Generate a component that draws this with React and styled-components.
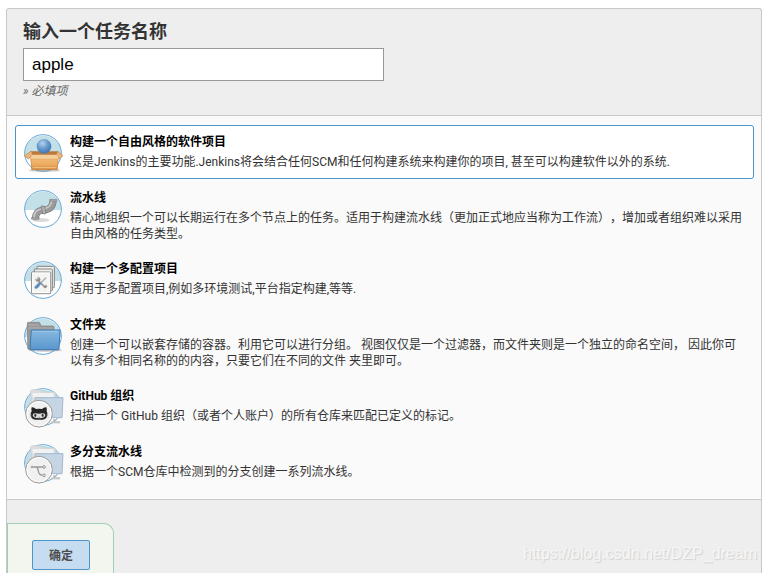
import React, { useState } from 'react'
import styled, { createGlobalStyle } from 'styled-components'

const GlobalStyle = createGlobalStyle`
    * {
        box-sizing: border-box;
    }
    body {
        margin: 0;
        background: #fff;
        color: #333;
        font-family: Roboto, 'Noto Sans CJK SC', sans-serif;
        font-size: 12px;
        line-height: 16px;
        text-spacing-trim: space-all;
    }
`

const PageStyled = styled.main`
    display: flex;
    min-height: 100vh;
    padding: 8px 5px 0 6px;
`

const PanelStyled = styled.form`
    position: relative;
    display: flex;
    flex: 1;
    flex-direction: column;
    border: 1px solid #c8c8c8;
    border-bottom: 0;
    border-radius: 3px 3px 0 0;
    background: #eee;
`

const HeaderStyled = styled.header`
    display: flex;
    flex-direction: column;
    align-items: flex-start;
    padding: 10px 16px 16px;
`

const NameLabel = styled.label`
    font-size: 18px;
    font-weight: bold;
    line-height: 26px;
`

const NameInput = styled.input`
    width: 361px;
    max-width: 100%;
    height: 33px;
    margin-top: 3px;
    padding: 0 8px;
    border: 1px solid #999;
    outline: 0;
    background: #fff;
    color: #000;
    font-family: 'Liberation Sans', Arial, sans-serif;
    font-size: 17px;
`

const Hint = styled.p`
    margin: 2px 0 0;
    color: #666;
    font-style: italic;
`

const JobList = styled.ul`
    display: flex;
    flex-direction: column;
    gap: 2px;
    margin: 0;
    padding: 9px 7px 10px 8px;
    border: solid #c8c8c8;
    border-width: 1px 0;
    background: #fafafa;
    list-style: none;
`

const JobCard = styled.label`
    display: flex;
    gap: 8px;
    padding: 8px 8px 6px;
    border: 1px solid ${({ $active }) => ($active ? '#4b95cb' : 'transparent')};
    border-radius: 3px;
    background: ${({ $active }) => ($active ? '#fff' : 'transparent')};
    cursor: pointer;
`

const HiddenRadio = styled.input`
    position: absolute;
    opacity: 0;
    pointer-events: none;
`

const JobIcon = styled.svg`
    flex: none;
    width: 38px;
    height: 38px;
    overflow: visible;
`

const JobText = styled.div`
    flex: 1;
    padding-bottom: 1px;
`

const JobTitle = styled.strong`
    display: block;
    margin-bottom: 4px;
    color: #000;
`

const JobDescription = styled.span`
    display: block;
`

const FooterStyled = styled.footer`
    display: flex;
    flex: 1;
    align-items: stretch;
    padding-top: 23px;
`

const ButtonTray = styled.div`
    padding: 16px 23px 3px 24px;
    border: 1px solid #a3ceb8;
    border-bottom: 0;
    border-radius: 0 10px 0 0;
    background: #f3f6ee;
`

const SubmitButton = styled.button`
    width: 58px;
    height: 30px;
    padding: 0 0 2px;
    border: 1px solid #4b95cb;
    border-radius: 2px;
    background: #c6dcf1;
    color: #4d4d4d;
    font: bold 12px Roboto, 'Noto Sans CJK SC', sans-serif;
`

const Watermark = styled.span`
    position: absolute;
    right: 4px;
    bottom: 9px;
    color: #f6f6f6;
    font-family: 'Liberation Sans', Arial, sans-serif;
    font-size: 16px;
    line-height: 20px;
    text-shadow: 1px 1px 1px #d0d0d0;
`

const Backdrop = () => (
    <>
        <circle cx='57' cy='57' r='55' fill='#fff' />
        <path d='M2 60a55 55 0 0 1 110 0z' fill='#c3dfe8' />
        <circle cx='57' cy='57' r='55' fill='none' stroke='#65a7d7' strokeWidth='3' />
    </>
)

const FreestyleIcon = () => (
    <JobIcon viewBox='0 0 114 114' aria-hidden='true'>
        <defs>
            <radialGradient id='ball' cx='.4' cy='.3' r='.7'>
                <stop offset='0' stopColor='#b5d3ee' />
                <stop offset='.5' stopColor='#6b9dcc' />
                <stop offset='1' stopColor='#3d77b3' />
            </radialGradient>
            <linearGradient id='carton' x2='0' y2='1'>
                <stop offset='0' stopColor='#f3bd7a' />
                <stop offset='.6' stopColor='#eeae64' />
                <stop offset='1' stopColor='#d5873a' />
            </linearGradient>
        </defs>
        <Backdrop />
        <ellipse cx='62' cy='109' rx='47' ry='5' fill='#777' opacity='.35' />
        <path d='M23 52h76l3 16H20z' fill='#b9783c' />
        <circle cx='60' cy='37' r='22' fill='url(#ball)' />
        <path d='M20 65h83l-3 42H23z' fill='url(#carton)' stroke='#c07d3c' strokeWidth='2' />
        <path d='M22 51L1 65l12 10 13-12zM100 51l17 14-11 10-9-12z' fill='#e9b47b' stroke='#be8044' strokeWidth='2' />
        <path d='M23 62h77l5 13H18z' fill='#f6cf9b' stroke='#d09555' strokeWidth='1' />
        <path d='M26 101h71' stroke='#f3c585' strokeWidth='3' />
    </JobIcon>
)

const PipelineIcon = () => (
    <JobIcon viewBox='0 0 114 114' aria-hidden='true'>
        <Backdrop />
        <ellipse cx='51' cy='90' rx='25' ry='6' fill='#999' opacity='.35' />
        <g fill='none'>
            <path d='M34 87C35 69 42 62 56 61C74 60 87 53 88 29' stroke='#777' strokeWidth='21' />
            <path d='M34 86C35 69 42 62 56 61C74 60 87 53 88 30' stroke='#9b9b9b' strokeWidth='17' />
            <path d='M30 82C31 65 38 58 53 57C70 56 82 50 84 30' stroke='#c9c9c9' strokeWidth='5' />
        </g>
        <path d='M51 49q5-3 9 0 6 10 5 21-4 4-9 1z' fill='#b0b0b0' stroke='#747474' strokeWidth='2' />
        <path d='M77 28h22v6H77zM22 82q12 4 24 0v6q-12 5-24 0z' fill='#a5a5a5' stroke='#777' strokeWidth='1' />
    </JobIcon>
)

const MatrixIcon = () => (
    <JobIcon viewBox='0 0 114 114' aria-hidden='true'>
        <Backdrop />
        <g fill='#f1f1ef' stroke='#828282' strokeWidth='3'>
            <rect x='39' y='16' width='52' height='64' rx='2' />
            <rect x='31' y='24' width='54' height='65' rx='2' />
            <rect x='23' y='33' width='57' height='65' rx='2' fill='#f4f4f2' />
        </g>
        <rect x='26' y='36' width='51' height='59' fill='none' stroke='#fff' strokeWidth='3' />
        <path d='M40 55l23 24' stroke='#959595' strokeWidth='5' strokeLinecap='round' />
        <path d='M33 52l6 6 5-6-5-4 7 1 4 7-6 6-8-1zM59 76l8-5 3 6-6 5z' fill='#909090' />
        <path d='M65 51L48 68' stroke='#aaa' strokeWidth='4' strokeLinecap='round' />
        <path d='M34 76l12-13 5 5-9 12q-8 5-10 0z' fill='#5c8fc0' stroke='#4d7dab' strokeWidth='1' />
    </JobIcon>
)

const FolderIcon = () => (
    <JobIcon viewBox='0 0 114 114' aria-hidden='true'>
        <defs>
            <linearGradient id='folder' x2='0' y2='1'>
                <stop offset='0' stopColor='#88b9df' />
                <stop offset='1' stopColor='#5996cd' />
            </linearGradient>
        </defs>
        <Backdrop />
        <ellipse cx='63' cy='99' rx='50' ry='5' fill='#777' opacity='.45' />
        <path d='M10 19q0-3 3-3h31q3 0 4 3l3 8h35q4 0 4 4v66H15q-4 0-4-4z' fill='#999' stroke='#7d7d7d' strokeWidth='2' />
        <path d='M14 24h30M14 33h72' stroke='#b0b0b0' strokeWidth='3' />
        <path d='M22 39h86l-3 56q0 3-3 3H21q-3 0-3-4z' fill='url(#folder)' stroke='#397bb8' strokeWidth='3' />
        <path d='M25 43h79' stroke='#a8cfec' strokeWidth='2' />
    </JobIcon>
)

// Shared folder for the two jobs that scan repositories
const RepoIcon = ({ children }) => (
    <JobIcon viewBox='0 0 114 114' aria-hidden='true'>
        <Backdrop />
        <path d='M82 103h26M91 93v10' stroke='#b3b6b9' strokeWidth='6' />
        <path d='M84 102h24' stroke='#e2e4e6' strokeWidth='2' />
        <path d='M20 10q0-5 5-5h25l4 7h36q5 0 5 5v65H24z' fill='#dcdedf' stroke='#c2c8cb' strokeWidth='2' />
        <path d='M26 15h62v13H26z' fill='#f1f2f2' />
        <path d='M34 29h83l-3 60H31z' fill='#c5d5e4' stroke='#a3b9ce' strokeWidth='3' />
        <circle cx='45' cy='77' r='40' fill='#f0f0f0' stroke='#999' strokeWidth='3' />
        <circle cx='45' cy='77' r='36' fill='none' stroke='#fff' strokeWidth='3' />
        {children}
    </JobIcon>
)

const GithubIcon = () => (
    <RepoIcon>
        <path d='M23 58q7-1 13 5 9-2 18 0 6-6 13-5 3 6 1 12 4 6 2 13-3 10-14 12H34q-12-2-14-12-2-7 3-13-2-6 0-12z' fill='#252525' />
        <path d='M26 82q1-7 8-6 11 2 22 0 7-1 8 6-1 9-19 9t-19-9z' fill='#ddd' />
        <ellipse cx='34' cy='82' rx='3' ry='5' fill='#333' />
        <ellipse cx='56' cy='82' rx='3' ry='5' fill='#333' />
        <path d='M42 88h6' stroke='#777' strokeWidth='2' />
        <path d='M17 79l7 2M16 87l8-2M66 81l8-2M66 85l8 3' stroke='#aaa' strokeWidth='1' />
    </RepoIcon>
)

const MultibranchIcon = () => (
    <RepoIcon>
        <path d='M24 69h35M36 69c7 1 6 9 8 16 2 8 7 9 15 9' fill='none' stroke='#9b9b9b' strokeWidth='4' />
        <circle cx='24' cy='69' r='4' fill='#aaa' />
        <circle cx='60' cy='69' r='4' fill='#eee' stroke='#999' strokeWidth='3' />
        <circle cx='60' cy='94' r='4' fill='#eee' stroke='#999' strokeWidth='3' />
    </RepoIcon>
)

const jobTypes = [
    {
        id: 'freestyle',
        Icon: FreestyleIcon,
        title: '构建一个自由风格的软件项目',
        text: '这是Jenkins的主要功能.Jenkins将会结合任何SCM和任何构建系统来构建你的项目, 甚至可以构建软件以外的系统.',
    },
    {
        id: 'pipeline',
        Icon: PipelineIcon,
        title: '流水线',
        text: '精心地组织一个可以长期运行在多个节点上的任务。适用于构建流水线（更加正式地应当称为工作流），增加或者组织难以采用自由风格的任务类型。',
    },
    {
        id: 'matrix',
        Icon: MatrixIcon,
        title: '构建一个多配置项目',
        text: '适用于多配置项目,例如多环境测试,平台指定构建,等等.',
    },
    {
        id: 'folder',
        Icon: FolderIcon,
        title: '文件夹',
        text: '创建一个可以嵌套存储的容器。利用它可以进行分组。 视图仅仅是一个过滤器，而文件夹则是一个独立的命名空间， 因此你可以有多个相同名称的的内容，只要它们在不同的文件 夹里即可。',
    },
    {
        id: 'github',
        Icon: GithubIcon,
        title: 'GitHub 组织',
        text: '扫描一个 GitHub 组织（或者个人账户）的所有仓库来匹配已定义的标记。',
    },
    {
        id: 'multibranch',
        Icon: MultibranchIcon,
        title: '多分支流水线',
        text: '根据一个SCM仓库中检测到的分支创建一系列流水线。',
    },
]

const App = () => {
    const [name, setName] = useState('apple')
    const [selected, setSelected] = useState('freestyle')

    return (
        <PageStyled>
            <GlobalStyle />
            <PanelStyled onSubmit={e => e.preventDefault()}>
                <HeaderStyled>
                    <NameLabel htmlFor='name'>输入一个任务名称</NameLabel>
                    <NameInput id='name' type='text' value={name} onChange={e => setName(e.target.value)} />
                    <Hint>» 必填项</Hint>
                </HeaderStyled>
                <JobList>
                    {jobTypes.map(({ id, Icon, title, text }) => (
                        <li key={id}>
                            <JobCard $active={selected === id}>
                                <HiddenRadio
                                    type='radio'
                                    name='mode'
                                    value={id}
                                    checked={selected === id}
                                    onChange={() => setSelected(id)}
                                />
                                <Icon />
                                <JobText>
                                    <JobTitle>{title}</JobTitle>
                                    <JobDescription>{text}</JobDescription>
                                </JobText>
                            </JobCard>
                        </li>
                    ))}
                </JobList>
                <FooterStyled>
                    <ButtonTray>
                        <SubmitButton type='submit'>确定</SubmitButton>
                    </ButtonTray>
                </FooterStyled>
                <Watermark>https://blog.csdn.net/DZP_dream</Watermark>
            </PanelStyled>
        </PageStyled>
    )
}

export default App
